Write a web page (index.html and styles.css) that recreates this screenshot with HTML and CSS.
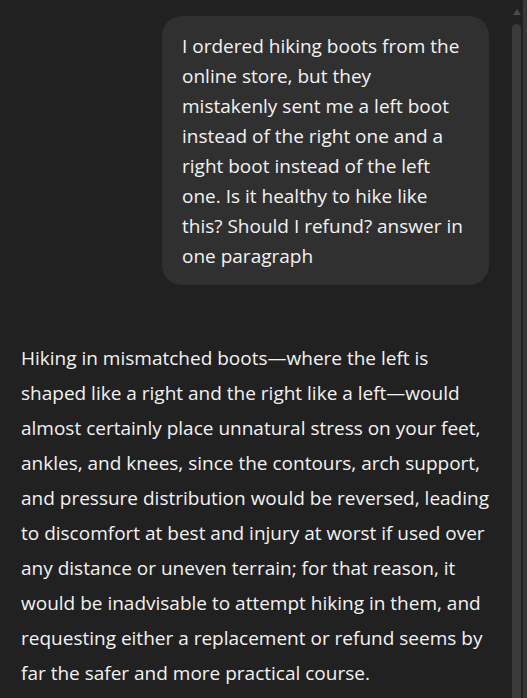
FILE: index.html
```html
<!DOCTYPE html>
<html lang="en">
<head>
<meta charset="utf-8">
<title>Chat</title>
<link rel="stylesheet" href="styles.css">
</head>
<body>
<div class="window">
  <main class="thread">
    <div class="user-row">
      <div class="bubble">I ordered hiking boots from the<br>online store, but they<br>mistakenly sent me a left boot<br>instead of the right one and a<br>right boot instead of the left<br>one. Is it healthy to hike like<br>this? Should I refund? answer in<br>one paragraph</div>
    </div>
    <div class="answer">Hiking in mismatched boots—where the left is<br>shaped like a right and the right like a left—would<br>almost certainly place unnatural stress on your feet,<br>ankles, and knees, since the contours, arch support,<br>and pressure distribution would be reversed, leading<br>to discomfort at best and injury at worst if used over<br>any distance or uneven terrain; for that reason, it<br>would be inadvisable to attempt hiking in them, and<br>requesting either a replacement or refund seems by<br>far the safer and more practical course.</div>
  </main>
  <div class="scrollbar">
    <div class="arrow"></div>
    <div class="thumb"></div>
  </div>
  <div class="edge"></div>
</div>
</body>
</html>
```
FILE: styles.css
```css
html, body {
  margin: 0;
  padding: 0;
  height: 100%;
  background: #212121;
  overflow: hidden;
}
.window {
  display: flex;
  height: 698px;
  font-family: "Open Sans", "Noto Sans", sans-serif;
  font-size: 19px;
  color: #f2f2f2;
}
.thread {
  flex: 1;
  display: flex;
  flex-direction: column;
  padding: 16px 23px 0 21px;
  min-width: 0;
}
.user-row {
  display: flex;
  justify-content: flex-end;
}
.bubble {
  background: #303030;
  border-radius: 20px;
  width: 287px;
  padding: 15px 20px 14px 20px;
  line-height: 30px;
  white-space: nowrap;
}
.answer {
  margin-top: 56px;
  line-height: 35px;
  white-space: nowrap;
}
.scrollbar {
  width: 9px;
  margin-right: 2px;
  display: flex;
  flex-direction: column;
  align-items: center;
}
.arrow {
  margin-top: 9px;
  width: 0;
  height: 0;
  border-left: 4.5px solid transparent;
  border-right: 4.5px solid transparent;
  border-bottom: 6px solid #4a4a4a;
}
.thumb {
  margin-top: 9px;
  width: 9px;
  flex: 1;
  background: #3b3b3b;
  border-radius: 5px 5px 0 0;
}
.edge {
  width: 4px;
  background: #383838;
}
```
